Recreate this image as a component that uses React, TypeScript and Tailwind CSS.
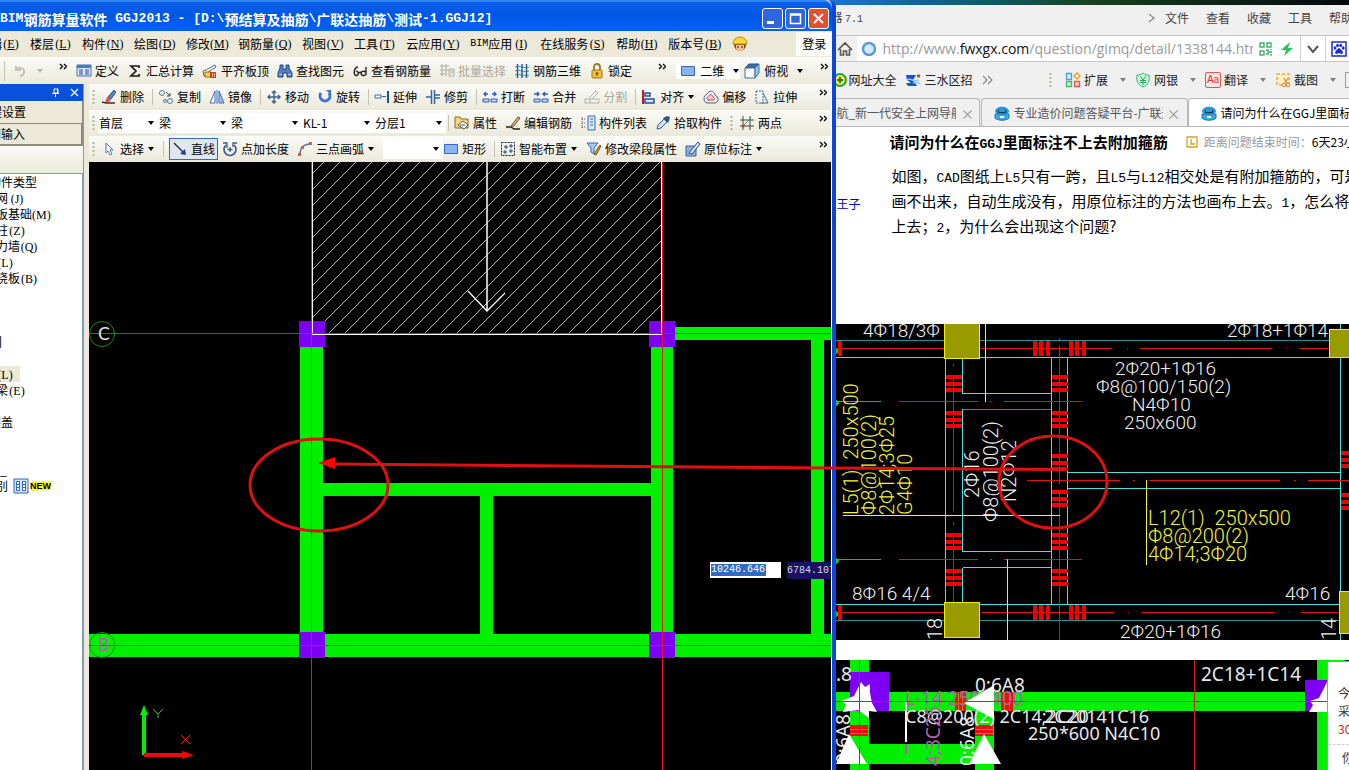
import type { ReactNode } from "react";

const icons: Record<string, ReactNode> = {
  define: (
    <>
      <path d="M1 2h14v11H1z" fill="#dbe7fb" stroke="#4a6fb5" />
      <path d="M1 2h14v3H1z" fill="#4a78c8" />
      <path d="M3 7h4M3 9h4M3 11h4M9 7h4M9 9h4M9 11h4" stroke="#27488c" />
    </>
  ),
  sigma: <path d="M12 5V3H4l5 5-5 5h8v-2" fill="none" stroke="#1a1a1a" strokeWidth="1.700" />,
  slab: (
    <>
      <path d="M1 8l3-1 9-5 1 2-8 5v4H2z" fill="#fff" stroke="#3d6b96" />
      <path d="M3 9h6v5H3z" fill="#ffd23f" stroke="#a86b00" />
      <path d="M8 15V9h6v6z" fill="#b5482a" />
      <path d="M10.500 10v4M12.500 10v4" stroke="#e8b090" />
    </>
  ),
  find: (
    <>
      <path d="M3 2h3v4h3V2h3v3l3 5v4h-5v-4H6v4H1v-4l2-5z" fill="#4f7fc4" stroke="#23457f" />
      <path d="M2.500 11.500h2M11.500 11.500h2" stroke="#fff" />
    </>
  ),
  glasses: (
    <path
      d="M6 4C2 4 1 12 4 12.500s3-5 0-4M7 10c1-1 2-1 2 0M14 4v8M13.500 9c-2-1.500-4.500-.5-4.500 1.500s3.500 3 4.500 1"
      fill="none"
      stroke="#222"
      strokeWidth="1.400"
    />
  ),
  batch: (
    <path d="M1 3h9M1 7h9M1 11h6M3 1v12M7 1v12M10 6h5v7h-5zM11 8h3M11 10h3" fill="none" stroke="#b0aea2" />
  ),
  rebar3d: (
    <>
      <path d="M1 4c5-2 9 2 14 0M1 8c5-2 9 2 14 0M1 12c5-2 9 2 14 0" fill="none" stroke="#3f8ad0" />
      <path d="M3.500 1v14M8 1v14M12.500 1v14" stroke="#1d5796" strokeWidth="1.400" />
    </>
  ),
  lock: (
    <>
      <path d="M5 7V4a3 3 0 0 1 6 0v3" fill="none" stroke="#9a7a22" strokeWidth="1.800" />
      <rect x="3" y="7" width="10" height="8" rx="1" fill="#f4bd3a" stroke="#a37413" />
      <path d="M8 9v4M6.500 10.500h3" stroke="#604000" />
    </>
  ),
  rect: <path d="M1.500 3.500h13v9h-13z" fill="#8bb2f5" stroke="#3a67bb" />,
  cube: (
    <>
      <path d="M1 5l4-4h10l-4 4z" fill="#3b6ea5" stroke="#1f4a7c" />
      <path d="M1 5h10v10H1z" fill="#fff" stroke="#3b6ea5" />
      <path d="M11 5l4-4v9l-4 5z" fill="#9fc0e6" stroke="#3b6ea5" />
    </>
  ),
  erase: (
    <>
      <path d="M7 8l6-7 2 2-5 7z" fill="#5b84c4" stroke="#38527f" />
      <path d="M6 8l4 2-2 3-4 1z" fill="#e0533d" />
      <path d="M1 13l4 1h9" fill="none" stroke="#333" strokeWidth="1.300" />
    </>
  ),
  copy: (
    <g fill="none" stroke="#587aa6">
      <circle cx="4" cy="4" r="2.500" />
      <circle cx="12" cy="12" r="2.500" />
      <circle cx="7" cy="12" r="1.500" />
      <path d="M8 3l4 4m0-3v3H9" stroke="#444" />
    </g>
  ),
  mirror: (
    <>
      <path d="M6 2v12H1z" fill="#fff" stroke="#3d6cb9" />
      <path d="M10 2v12h5z" fill="#9dbdec" stroke="#3d6cb9" />
      <path d="M8 1v14" stroke="#3d6cb9" />
    </>
  ),
  move: (
    <path
      d="M8 2v12M2 8h12M6 4l2-2 2 2M6 12l2 2 2-2M4 6L2 8l2 2M12 6l2 2-2 2"
      fill="none"
      stroke="#3f628f"
      strokeWidth="1.400"
    />
  ),
  rotate: (
    <>
      <path d="M4 4a5 5 0 1 0 8 0" fill="none" stroke="#3f73d2" strokeWidth="3" />
      <path d="M9 1h5v5z" fill="#3f73d2" />
    </>
  ),
  extend: (
    <>
      <path d="M1 6h6v3H1zM8 7.500h4" fill="#fff" stroke="#3466a8" />
      <path d="M14 2v12" stroke="#234f8c" strokeWidth="2" />
    </>
  ),
  trim: (
    <>
      <path d="M6.500 1v14M9.500 1v14" stroke="#3466a8" strokeWidth="1.500" />
      <path d="M1 8h5M10 6h5M10 9h5" stroke="#3466a8" strokeWidth="1.500" />
    </>
  ),
  breakAt: (
    <g fill="none" stroke="#2f5fb3">
      <path d="M1 10h6v3H1zM9 10h6v3H9z" fill="#c7d9f5" />
      <path d="M2 5h4M4 3L2 5l2 2M10 5h4M12 3l2 2-2 2" strokeWidth="1.400" />
    </g>
  ),
  join: (
    <g fill="none" stroke="#2f5fb3">
      <path d="M1 10h6v3H1zM9 10h6v3H9z" fill="#c7d9f5" />
      <path d="M1 5h5M4 3l2 2-2 2M10 5h5M12 3l-2 2 2 2" strokeWidth="1.400" />
    </g>
  ),
  split: <path d="M1 10h14v4H1zM5 9l7-7 2 2-6 6M6 10v4" fill="none" stroke="#b3b1a5" />,
  align: (
    <>
      <path d="M2 1v14" stroke="#b41f2c" strokeWidth="2" />
      <path d="M4 4h5v3H4zM4 10h9v4H4z" fill="#d7e4fa" stroke="#2b4f96" strokeWidth="1.500" />
    </>
  ),
  offset: (
    <g fill="none">
      <path d="M4 5c2-4 7-4 8 1 4 2 4 7 0 8H4c-4-1-4-7 0-9z" stroke="#4b5f8c" />
      <path d="M6 7c1-2 3-2 4 1 2 1 2 3 0 3H5c-2-1-1-3 1-4z" stroke="#c8445a" fill="#f6c8cf" />
    </g>
  ),
  stretch: (
    <>
      <path d="M2 2h7v12H2z" fill="none" stroke="#3466a8" strokeDasharray="2 1" />
      <path d="M9 4l5 10H7" fill="none" stroke="#3466a8" />
    </>
  ),
  props: (
    <>
      <path d="M1 4V2h5l1 2h7v9H1z" fill="#f7d47a" stroke="#8a6b2a" />
      <path d="M4 10l5-4 5 4-4 4z" fill="#fff" stroke="#5a5a5a" />
      <path d="M6 10h5" stroke="#5a5a5a" />
    </>
  ),
  editBar: (
    <>
      <path d="M1 12h5l3 2h6" fill="none" stroke="#222" strokeWidth="1.500" />
      <path d="M6 11l7-9 2 1-6 8z" fill="#e7b77d" stroke="#6b4a22" />
    </>
  ),
  list: (
    <>
      <path d="M2 2v12M2 4h3M2 8h3M2 12h3" stroke="#555" strokeDasharray="1 1" />
      <path d="M8 1h7v14H8z" fill="#dbe7fb" stroke="#3f68ad" />
      <path d="M10 4h3M10 7h3M10 10h3" stroke="#3f68ad" />
    </>
  ),
  pick: (
    <>
      <path d="M2 14l1-4 6-6 3 3-6 6z" fill="#cfe0f5" stroke="#345f96" />
      <path d="M8 3l5 5 1-2 1-4-3-1-2 1z" fill="#2c568f" />
    </>
  ),
  twoPoint: (
    <>
      <path d="M1 5h14M1 11h14M4 1v14M11 1v14" stroke="#444" />
      <path d="M3 12l9-9" stroke="#3a9a4a" />
      <circle cx="4" cy="11" r="1.500" fill="#c93535" />
    </>
  ),
  cursor: <path d="M5 2v10l2-2 2 4 2-1-2-4h3z" fill="#fff" stroke="#5773a8" />,
  line: (
    <>
      <path d="M2 2l10 10" stroke="#222" strokeWidth="1.300" />
      <path d="M14 14l-6-1 5-5z" fill="#23457f" />
    </>
  ),
  pointLen: (
    <>
      <path d="M4 4a6 6 0 1 0 8 0" fill="none" stroke="#36598c" strokeWidth="1.600" />
      <path d="M1 2h4v5M8 6v5M5.500 8.500h5M15 2h-4v4" fill="none" stroke="#36598c" strokeWidth="1.300" />
    </>
  ),
  arc: (
    <>
      <path d="M3 14C3 7 7 3 13 3" fill="none" stroke="#56779f" strokeWidth="1.500" />
      <path d="M1 12h3v3H1zM4 5h3v3H4zM12 1h3v3h-3z" fill="#c9614f" />
    </>
  ),
  smart: (
    <>
      <path d="M1.500 1.500h13v13h-13z" fill="none" stroke="#222" strokeDasharray="2 1" />
      <path d="M6 4v4M4 6h4M11 3v4M9 5h4M5 9v4M3 11h4M11 8v4M9 10h4" stroke="#24468c" />
    </>
  ),
  modify: (
    <>
      <path d="M1 2h11l-4 5v6l-3-2V7z" fill="#a7cbf2" stroke="#3269a8" />
      <path d="M8 13l6-9 1 1-5 9z" fill="#e6a35a" stroke="#704614" />
    </>
  ),
  note: (
    <>
      <path d="M1 5h10v10H1z" fill="#8db1de" stroke="#3c639a" />
      <path d="M4 12l9-11 2 2-8 10z" fill="#dbe7fb" stroke="#24477f" />
    </>
  ),
  undo: (
    <path d="M4 3v4h5M4 7c3-4 9-2 8 3-1 2-2 3-4 3" fill="none" stroke="#c4c2b8" strokeWidth="2" />
  ),
  helmet: (
    <>
      <circle cx="8" cy="9" r="6" fill="#8a4a24" />
      <path d="M1 8a7 7 0 0 1 14 0z" fill="#ffd633" stroke="#b58a00" />
      <path d="M4 9h8v3a4 3 0 0 1-8 0z" fill="#f3c091" />
      <path d="M6 10v2M10 10v2" stroke="#222" />
    </>
  ),
  table: (
    <>
      <path d="M1 1h14v14H1z" fill="#cfe3fa" stroke="#2f6ab5" />
      <path d="M3.500 3.500h3v9h-3zM9.500 3.500h3v9h-3zM3 6.500h4M3 9.500h4M9 6.500h4M9 9.500h4" fill="#fff" stroke="#2f6ab5" />
    </>
  ),
  home: <path d="M1 9l7-7 7 7M3.500 8v6h3v-4h3v4h3V8" fill="none" stroke="#555" strokeWidth="1.600" />,
  globe: <circle cx="8" cy="8" r="6" fill="#d4e9fb" stroke="#5e9ad8" strokeWidth="2.500" />,
  qr: (
    <g fill="none" stroke="#3eb370" strokeWidth="1.400">
      <path d="M2 2h4v4H2zM9 2h4v4H9zM2 10h4v4H2z" />
      <path d="M8 9h2v2h4M8 13h3M13 13v2M13 8v1" />
    </g>
  ),
  bolt: <path d="M11 1L2 9h5l-2 6 9-8H9z" fill="#2fbf63" />,
  chevDown: <path d="M3 5l5 6 5-6" fill="none" stroke="#555" strokeWidth="2" />,
  paw: (
    <>
      <path d="M1 1h14v14H1z" fill="#fff" stroke="#1a2bd8" strokeWidth="1.500" />
      <g fill="#1a2bd8">
        <ellipse cx="4" cy="7" rx="1.400" ry="1.800" />
        <ellipse cx="6.500" cy="4.500" rx="1.400" ry="1.800" />
        <ellipse cx="9.700" cy="4.500" rx="1.400" ry="1.800" />
        <ellipse cx="12.200" cy="7" rx="1.400" ry="1.800" />
        <path d="M8 7c2 1 4 3 4 5-1 2-3 0-4 0s-3 2-4 0c0-2 2-4 4-5z" />
      </g>
    </>
  ),
  hao: (
    <>
      <circle cx="8" cy="8" r="7" fill="#1fa24a" />
      <circle cx="8" cy="8" r="5" fill="#ffe23b" />
      <path d="M8 5v6M5 8h6" stroke="#16803a" strokeWidth="2" />
    </>
  ),
  sanshui: (
    <>
      <path d="M1 3h10l-3 5 4 6H3l-2-3h5L2 8z" fill="#1e50c8" />
      <path d="M2 8c4-3 7 3 12 0M8 11c3-2 5 1 7 0" fill="none" stroke="#8fd0ff" strokeWidth="1.500" />
      <circle cx="13.500" cy="4" r="1.700" fill="#e23c2b" />
    </>
  ),
  extensions: (
    <g strokeWidth="1.300">
      <path d="M1.500 1.500h5v6h-5z" fill="#d4ecff" stroke="#4aa0e0" />
      <path d="M12 1l3 3-3 3-3-3z" fill="#fff" stroke="#f0a020" strokeWidth="1.500" />
      <path d="M1.500 9.500h5v5h-5z" fill="#c9f2d6" stroke="#3cba68" />
      <path d="M9.500 9.500h5v5h-5z" fill="#fbd0cc" stroke="#e2584e" />
    </g>
  ),
  bank: (
    <>
      <path d="M8 1c2 2 4 2 6 2 1 6-1 10-6 12C3 13 1 9 2 3c2 0 4 0 6-2z" fill="#d5f5df" stroke="#35b765" />
      <path d="M5 4l3 4 3-4M8 8v5M5 8.500h6M5 10.500h6" fill="none" stroke="#26a355" />
    </>
  ),
  snip: (
    <>
      <path d="M2 2h12v11H2z" fill="#fff0c8" stroke="#f0a630" strokeWidth="1.500" strokeDasharray="3 2" />
      <path d="M9 6l3 6M13 6l-4 6" stroke="#c97420" />
      <circle cx="9" cy="13" r="1.700" fill="#fff" stroke="#e0852a" />
      <circle cx="13" cy="13" r="1.700" fill="#fff" stroke="#e0852a" />
    </>
  ),
  robot: (
    <>
      <path d="M1 7C1 0 15 0 15 7l-2 2H3z" fill="#2196d8" />
      <path d="M4 5h8v3H4z" fill="#123a5c" />
      <path d="M5 6h6" stroke="#9fdcff" />
      <path d="M1 9h14v4c-3 3-11 3-14 0z" fill="#35abe6" stroke="#1878b0" />
      <path d="M6 11h4v2H6z" fill="#fff" />
    </>
  ),
  clock: <path d="M3 3h10v10H3zM7 5v5h4" fill="none" stroke="#d8a032" strokeWidth="1.300" />,
};

function Icon({ name }: { name: string }) {
  return (
    <svg viewBox="0 0 16 16" className="h-4 w-4 shrink-0">
      {icons[name]}
    </svg>
  );
}

function Caret({ gray }: { gray?: boolean }) {
  return (
    <svg viewBox="0 0 8 6" className="h-[6px] w-2 shrink-0">
      <path d="M1 1h6L4 5z" fill={gray ? "#808080" : "#000"} />
    </svg>
  );
}

function More() {
  return (
    <svg viewBox="0 0 8 8" className="h-2 w-2 shrink-0 self-start">
      <path d="M1 1l2.500 2.500L1 6M5 1l2.500 2.500L5 6" fill="none" stroke="#000" strokeWidth="1.300" />
    </svg>
  );
}

function Grip() {
  return (
    <svg viewBox="0 0 3 16" className="h-4 w-[3px] shrink-0">
      <path d="M1.500 1v15" stroke="#b5b3a4" strokeWidth="2" strokeDasharray="2 2" />
    </svg>
  );
}

function Sep() {
  return <span className="mr-[5px] h-4 w-px shrink-0 bg-[#c5c2b2]" />;
}

function Tool({ icon, label, off, caret }: { icon: string; label: string; off?: boolean; caret?: boolean }) {
  return (
    <button
      disabled={off}
      className="mr-2 flex shrink-0 items-center gap-[3px] whitespace-nowrap text-black disabled:text-[#aca899]"
    >
      <Icon name={icon} />
      {label}
      {caret && <Caret />}
    </button>
  );
}

function Combo({ label, value, wide }: { label: string; value: string; wide?: boolean }) {
  return (
    <span className={`relative flex h-5 shrink-0 items-center bg-white ${wide ? "w-[72px]" : "w-[60px]"}`}>
      <select
        aria-label={label}
        className="h-5 w-full appearance-none bg-transparent pl-px font-['Noto_Sans_CJK_SC',sans-serif] text-xs outline-none"
      >
        <option>{value}</option>
      </select>
      <span className="pointer-events-none absolute right-[3px] flex h-5 items-center">
        <Caret />
      </span>
    </span>
  );
}

function Key({ k, plain }: { k: string; plain?: boolean }) {
  return (
    <span className="inline-block w-[18px] text-center font-['Liberation_Serif',serif]">
      ({plain ? k : <u>{k}</u>})
    </span>
  );
}

function Mono({ children }: { children: ReactNode }) {
  return <span className="font-['Liberation_Mono',monospace] text-[13px] leading-none">{children}</span>;
}

const menus = [
  ["编辑", "E"],
  ["楼层", "L"],
  ["构件", "N"],
  ["绘图", "D"],
  ["修改", "M"],
  ["钢筋量", "Q"],
  ["视图", "V"],
  ["工具", "T"],
  ["云应用", "Y"],
  ["BIM应用", "I"],
  ["在线服务", "S"],
  ["帮助", "H"],
  ["版本号", "B"],
];

const treeRows: [string, string][] = [
  ["轴网", "J"],
  ["筏板基础", "M"],
  ["框柱", "Z"],
  ["剪力墙", "Q"],
  ["梁", "L"],
  ["现浇板", "B"],
  ["", ""],
  ["", ""],
  ["", ""],
  ["门", ""],
  ["", ""],
  ["梁", "L"],
  ["圈梁", "E"],
];

const band = "flex h-[26px] items-center overflow-hidden bg-linear-to-b from-[#fbfbf8] to-[#ebe9da] pr-1 pl-[3px]";

function TitleBar() {
  return (
    <header className="flex h-[31px] items-center justify-between overflow-hidden rounded-tr-lg border-t-2 border-[#2f86f5] bg-linear-to-b from-[#0a5ee8] via-[#0058e6] to-[#0062f8] pr-[3px]">
      <h1 className="flex items-center pt-1 text-sm leading-5 font-bold whitespace-pre text-white">
        <Mono>BIM</Mono>钢筋算量软件
        <Mono> GGJ2013 - [D:\</Mono>预结算及抽筋
        <Mono>\</Mono>广联达抽筋
        <Mono>\</Mono>测试
        <Mono>-1.GGJ12]</Mono>
      </h1>
      <div className="flex gap-[2px] pt-1">
        <button aria-label="最小化" className="h-[21px] w-[21px] rounded-[3px] border border-white bg-[#2f66e0]">
          <svg viewBox="0 0 19 19">
            <path d="M4 12h7v3H4z" fill="#fff" />
          </svg>
        </button>
        <button aria-label="最大化" className="h-[21px] w-[21px] rounded-[3px] border border-white bg-[#2f66e0]">
          <svg viewBox="0 0 19 19">
            <path d="M4.500 5h10v9.500h-10zM4 6h11" fill="none" stroke="#fff" strokeWidth="1.500" />
          </svg>
        </button>
        <button aria-label="关闭" className="h-[21px] w-[21px] rounded-[3px] border border-white bg-[#e0512f]">
          <svg viewBox="0 0 19 19">
            <path d="M5 5l9 9M14 5l-9 9" stroke="#fff" strokeWidth="2.200" />
          </svg>
        </button>
      </div>
    </header>
  );
}

function MenuBar() {
  return (
    <nav className="flex h-[26px] items-center overflow-hidden bg-[#ece9d8]">
      <div className="-ml-[22px] flex">
        {menus.map(([label, key]) => (
          <button key={label} className="mr-[10px] flex shrink-0 items-center whitespace-nowrap">
            {label.startsWith("BIM") ? (
              <>
                <span className="font-['Liberation_Mono',monospace] text-[10px]">BIM</span>
                {label.slice(3)}
              </>
            ) : (
              label
            )}
            <Key k={key} />
          </button>
        ))}
      </div>
      <Icon name="helmet" />
      <button className="ml-auto h-6 shrink-0 bg-[#fbfaf5] px-[6px] whitespace-nowrap">登录</button>
    </nav>
  );
}

function MainToolbar() {
  return (
    <div className="flex h-[27px] items-center overflow-hidden bg-linear-to-b from-[#fbfbf8] to-[#ebe9da] pr-1">
      <span className="ml-1 h-5 w-px bg-[#c5c2b2]" />
      <button aria-label="撤销" disabled className="ml-[7px] flex items-center gap-2">
        <Icon name="undo" />
        <svg viewBox="0 0 8 6" className="h-[6px] w-2">
          <path d="M1 1h6L4 5z" fill="#b5b3a7" />
        </svg>
      </button>
      <span className="mr-[9px] ml-[15px] flex h-4 items-start">
        <More />
      </span>
      <Tool icon="define" label="定义" />
      <Tool icon="sigma" label="汇总计算" />
      <Tool icon="slab" label="平齐板顶" />
      <Tool icon="find" label="查找图元" />
      <Tool icon="glasses" label="查看钢筋量" />
      <Tool icon="batch" label="批量选择" off />
      <Tool icon="rebar3d" label="钢筋三维" />
      <Tool icon="lock" label="锁定" />
      <span className="ml-auto flex h-4">
        <More />
      </span>
      <div className="ml-[10px] flex items-center">
        <button className="mr-1 flex items-center gap-1 bg-white pl-1">
          <Icon name="rect" />
          二维
          <span className="pl-1">
            <Caret />
          </span>
        </button>
        <button className="flex items-center gap-1">
          <Icon name="cube" />
          俯视
          <span className="pl-1">
            <Caret />
          </span>
        </button>
      </div>
      <span className="ml-4 flex h-4">
        <More />
      </span>
    </div>
  );
}

function SidePanel() {
  return (
    <aside className="flex w-[84px] shrink-0 flex-col overflow-hidden border-r border-[#9a9a8c] bg-[#ece9d8]">
      <div className="flex h-[17px] items-center justify-end gap-[10px] bg-[#0a50dc] pr-1">
        <svg viewBox="0 0 9 9" className="h-[9px] w-[9px]">
          <path d="M3 1h4v4H3zM1 5.500h7M4.500 6v3M6.500 1v4" fill="none" stroke="#fff" />
        </svg>
        <svg viewBox="0 0 9 9" className="h-[9px] w-[9px]">
          <path d="M1 1l7 7M8 1L1 8" stroke="#fff" strokeWidth="1.200" />
        </svg>
      </div>
      <button className="h-[23px] border-r border-b border-[#8c8a7c] text-left whitespace-nowrap">
        <span className="-ml-[22px]">工程设置</span>
      </button>
      <button className="h-[22px] border-r-2 border-b-2 border-[#8c8a7c] text-left whitespace-nowrap">
        <span className="-ml-[23px]">绘图输入</span>
      </button>
      <div className="h-[27px] bg-linear-to-b from-[#fbfbf8] to-[#ebe9da]" />
      <div className="flex-1 border-t border-r border-[#7f9db9] bg-white">
        <ul className="leading-4 whitespace-nowrap">
          <li className="-ml-[11px] h-4">构件类型</li>
          {treeRows.map(([label, key], i) => (
            <li key={i} className="-ml-4 h-4">
              <span className={i === 11 ? "inline-block h-4 bg-[#ece9d8] pr-[6px]" : label === "门" ? "pl-[6px]" : ""}>
                {label}
                {key && <Key k={key} plain />}
              </span>
            </li>
          ))}
          <li className="h-4" />
          <li className="-ml-[11px] h-4">楼盖</li>
          <li className="h-4" />
          <li className="h-4" />
          <li className="h-4">_</li>
          <li className="-ml-4 flex h-4 items-center">
            识别
            <span className="ml-[5px] flex">
              <Icon name="table" />
            </span>
            <svg viewBox="0 0 24 12" className="h-3 w-6">
              <path d="M1 2l22-1-1 9-20 1z" fill="#ffef3a" />
              <text x="1" y="9" fontSize="9" fontWeight="700" fontFamily="Liberation Sans, sans-serif">
                NEW
              </text>
            </svg>
          </li>
        </ul>
      </div>
    </aside>
  );
}

// x + y is constant along each hatch line, one line every 16px
const hatch = Array.from({ length: 33 }, (_, i) => 486 + i * 16);

function ModelCanvas() {
  return (
    <div className="relative min-h-[608px] flex-1 overflow-hidden bg-black">
      <svg className="absolute inset-0 h-full w-full" shapeRendering="crispEdges">
        <defs>
          <clipPath id="slab-area">
            <path d="M313 162h348v172H313z" />
          </clipPath>
        </defs>
        <g transform="translate(-89 -162)">
          <g clipPath="url(#slab-area)" stroke="#b8b8b8">
            {hatch.map((s) => (
              <path key={s} d={`M${s - 162} 162L${s - 334} 334`} />
            ))}
          </g>
          <g fill="#00f000">
            <path d="M300 346h23v288h-23zM651 346h22v288h-22z" />
            <path d="M89 634h760v23H89zM323 483h328v13H323zM480 496h13v138h-13z" />
            <path d="M675 327h174v13H675zM811 340h13v294h-13z" />
          </g>
          <path d="M299 321h26v26h-26zM649 321h26v26h-26zM299 632h26v26h-26zM649 632h26v26h-26z" fill="#7d00f5" />
          <path d="M312.500 162v172.500h349V162" fill="none" stroke="#fff" />
          <path d="M89 333h760v1H89zM89 645h760v1H89zM311 162h1v900h-1zM662 162h1v900h-1z" fill="#f01414" />
          <g fill="none" stroke="#fff" shapeRendering="auto">
            <path d="M487 162v149" strokeWidth="1.500" />
            <path d="M468 291l19 20 18-18" strokeWidth="1.300" />
          </g>
          <g fill="none" stroke="#1c8c1c" shapeRendering="auto">
            <circle cx="102" cy="334" r="12.500" />
            <circle cx="102" cy="645" r="12.500" />
          </g>
          <g fontFamily="DejaVu Sans, sans-serif" fontSize="17">
            <text x="98" y="340" fill="#e8e8e8">C</text>
            <text x="98" y="651" fill="#b060b0">B</text>
          </g>
          <g shapeRendering="auto">
            <path d="M142 755v-40h-2l4-10 4 10h-2v40z" fill="#00f000" />
            <path d="M144 753h38v-2l12 4-12 4v-2h-38z" fill="#f00808" />
            <path d="M153 709l5 5 5-5M158 714v4" fill="none" stroke="#22c022" />
            <path d="M181 735l9 9M190 735l-9 9" stroke="#d02020" />
          </g>
        </g>
      </svg>
      <div className="absolute top-[400px] left-[621px] flex gap-[6px] font-['Liberation_Mono',monospace] text-[10px] text-white">
        <div className="flex h-4 w-[71px] items-center bg-white pl-px">
          <input
            aria-label="X"
            defaultValue="10246.646"
            className="h-3 w-[55px] bg-[#316ac5] leading-3 text-white outline-none"
          />
        </div>
        <input
          aria-label="Y"
          defaultValue="6784.107"
          className="h-[17px] w-[71px] bg-[#1a1060] text-[#d8d8f0] outline-none"
        />
      </div>
    </div>
  );
}

function ModelWindow() {
  return (
    <section className="flex min-h-screen min-w-0 flex-col overflow-hidden rounded-tr-lg border-r-4 border-[#0a48dc] bg-[#ece9d8]">
      <TitleBar />
      <MenuBar />
      <MainToolbar />
      <div className="flex min-h-0 flex-1">
        <SidePanel />
        <div className="flex min-w-0 flex-1 flex-col border-r border-white pl-[5px]">
          <div className={band}>
            <Grip />
            <span className="w-[6px] shrink-0" />
            <Tool icon="erase" label="删除" />
            <Sep />
            <Tool icon="copy" label="复制" />
            <Tool icon="mirror" label="镜像" />
            <Sep />
            <Tool icon="move" label="移动" />
            <Tool icon="rotate" label="旋转" />
            <Sep />
            <Tool icon="extend" label="延伸" />
            <Tool icon="trim" label="修剪" />
            <Sep />
            <Tool icon="breakAt" label="打断" />
            <Tool icon="join" label="合并" />
            <Tool icon="split" label="分割" off />
            <Sep />
            <Tool icon="align" label="对齐" caret />
            <Tool icon="offset" label="偏移" />
            <Tool icon="stretch" label="拉伸" />
            <span className="ml-auto flex h-4">
              <More />
            </span>
          </div>
          <div className={band}>
            <Grip />
            <span className="w-[3px] shrink-0" />
            <Combo label="楼层" value="首层" />
            <Combo label="构件大类" value="梁" wide />
            <Combo label="构件类型" value="梁" wide />
            <Combo label="构件" value="KL-1" wide />
            <Combo label="分层" value="分层1" wide />
            <span className="w-[2px] shrink-0" />
            <Sep />
            <Tool icon="props" label="属性" />
            <Tool icon="editBar" label="编辑钢筋" />
            <Tool icon="list" label="构件列表" />
            <Tool icon="pick" label="拾取构件" />
            <Grip />
            <span className="w-[6px] shrink-0" />
            <Tool icon="twoPoint" label="两点" />
            <span className="ml-auto flex h-4">
              <More />
            </span>
          </div>
          <div className={band}>
            <Grip />
            <span className="w-[6px] shrink-0" />
            <Tool icon="cursor" label="选择" caret />
            <Sep />
            <button className="mr-1 flex h-[22px] shrink-0 items-center gap-[3px] border border-[#316ac5] bg-[#dfe6f2] px-[2px] whitespace-nowrap">
              <Icon name="line" />
              直线
            </button>
            <Tool icon="pointLen" label="点加长度" />
            <Tool icon="arc" label="三点画弧" caret />
            <Combo label="画弧方式" value="" />
            <Tool icon="rect" label="矩形" />
            <Sep />
            <Tool icon="smart" label="智能布置" caret />
            <Tool icon="modify" label="修改梁段属性" />
            <Tool icon="note" label="原位标注" caret />
            <span className="ml-auto flex h-4">
              <More />
            </span>
          </div>
          <ModelCanvas />
        </div>
      </div>
    </section>
  );
}

// each pair of beams carries stirrup marks in groups of three
const barsH = [341, 605];
const barsV = [375, 411, 533, 569];

const notes: [number, number, string][] = [
  [863, 337, "4Φ18/3Φ"],
  [1227, 337, "2Φ18+1Φ14"],
  [1115, 375, "2Φ20+1Φ16"],
  [1096, 393, "Φ8@100/150(2)"],
  [1132, 411, "N4Φ10"],
  [1124, 429, "250x600"],
  [852, 600, "8Φ16 4/4"],
  [1285, 600, "4Φ16"],
  [1120, 638, "2Φ20+1Φ16"],
];

const turned: [number, number, string, string][] = [
  [858, 515, "L5(1)  250x500", "#f2f23a"],
  [876, 515, "Φ8@100(2)", "#f2f23a"],
  [894, 515, "2Φ14;3Φ25", "#f2f23a"],
  [912, 515, "G4Φ10", "#f2f23a"],
  [979, 498, "2Φ16", "#f0f0f0"],
  [998, 522, "Φ8@100(2)", "#f0f0f0"],
  [1016, 502, "N2Φ12", "#f0f0f0"],
  [942, 640, "18", "#f0f0f0"],
  [1336, 640, "14", "#f0f0f0"],
];

function Triple({ x, y, upright }: { x: number; y: number; upright?: boolean }) {
  return upright ? (
    <path d={`M${x} ${y}h4v15h-4zM${x + 6} ${y}h4v15h-4zM${x + 13} ${y}h4v15h-4z`} fill="#f00000" />
  ) : (
    <path d={`M${x} ${y}h16v4h-16zM${x} ${y + 7}h16v4h-16zM${x} ${y + 13}h16v4h-16z`} fill="#f00000" />
  );
}

function CadDrawing() {
  return (
    <svg className="block h-[316px] w-full bg-black" role="img" aria-label="CAD图纸">
      <g transform="translate(-836 -324)">
        <g shapeRendering="crispEdges" fill="none">
          <path d="M836 340.500h513M962 409.500h89M836 620.500h513" stroke="#2a8f8f" />
          <path
            d="M836 357.500h513M836 604.500h513M945.500 358v244M962.500 358v35h89M962.500 602v-34M962.500 567.500h89M962.500 409v142.500h89M1051.500 357v247M1067.500 357v247M1067 472.500h273M1067 488.500h273M1340.500 324v316"
            stroke="#4ae0e0"
          />
          <path
            d="M836 348.500h108M981 348.500h131M1127 348.500h1M1140 348.500h132M1286 348.500h1M1299 348.500h30M836 612.500h108M982 612.500h132M1128 612.500h1M1142 612.500h133M1289 612.500h1M1301 612.500h38M899 401.500h79M990 401.500h2M1004 401.500h78M899 559.500h79M990 559.500h2M1004 559.500h78M1027 480.500h93M1133 480.500h2M1149 480.500h131M1294 480.500h2M1308 480.500h41M953.500 364v2M953.500 375v136M953.500 522v3M953.500 533v70M1059.500 338v2M1059.500 346v138M1059.500 490v150"
            stroke="#e01414"
          />
          <path d="M836 401.500h45M836 559.500h45" stroke="#20c020" />
          <path d="M836 348l3 3-3 3zM836 400l3 3-3 3zM836 558l3 3-3 3zM836 611l3 3-3 3z" fill="#20c020" />
          <path d="M985.500 324v78M1007.500 559v81M843 515.500h217M1146.500 480v85" stroke="#f2f23a" />
          {barsH.map((y) => (
            <g key={y}>
              <path d={`M838 ${y}h4v15h-4z`} fill="#f00000" />
              <Triple x={1033} y={y} upright />
              <Triple x={1069} y={y} upright />
            </g>
          ))}
          {barsV.map((y) => (
            <g key={y}>
              <Triple x={946} y={y} />
              <Triple x={1052} y={y} />
            </g>
          ))}
          <Triple x={1052} y={454} />
          <Triple x={1052} y={490} />
          <Triple x={1341} y={451} />
          <Triple x={1341} y={493} />
          <path
            d="M944.500 320h35v38h-35zM944.500 602.500h35v35h-35zM1329.500 329.500h35v28h-35zM1339.500 591.500h35v42h-35z"
            fill="#999900"
            stroke="#f2f200"
          />
        </g>
        <g fontFamily="Roboto, sans-serif" fontWeight="300" fontSize="19" fill="#f0f0f0">
          {notes.map(([x, y, t]) => (
            <text key={`${x}-${y}`} x={x} y={y}>
              {t}
            </text>
          ))}
          <g fill="#f2f23a" fontSize="20">
            <text x="1148" y="525" className="whitespace-pre">{"L12(1)  250x500"}</text>
            <text x="1148" y="543">Φ8@200(2)</text>
            <text x="1148" y="561">4Φ14;3Φ20</text>
          </g>
          {turned.map(([x, y, t, color]) => (
            <text
              key={`${x}-${y}`}
              transform={`translate(${x} ${y}) rotate(-90)`}
              fill={color}
              fontSize="20"
              className="whitespace-pre"
            >
              {t}
            </text>
          ))}
        </g>
      </g>
    </svg>
  );
}

function ModelPhoto() {
  return (
    <svg className="block h-[110px] w-full bg-black" role="img" aria-label="模型截图">
      <g transform="translate(-836 -660)">
        <g shapeRendering="crispEdges">
          <path
            d="M836 692h491v19H836zM850 660h19v110h-19zM975 711h19v59h-19zM869 744h106v20H869zM1317 660h10v110h-10zM1327 660h18v3h-18z"
            fill="#00f000"
          />
          <path d="M850 672h39v39h-39zM1305 680h22v31h-22z" fill="#7d00f5" />
          <path d="M850 725h18v11h-18zM975 725h18v11h-18zM955 692h11v19h-11zM1001 692h12v19h-12z" fill="#e81010" />
          <path
            d="M850 729.500h18M850 733.500h18M975 729.500h18M975 733.500h18M958.500 692v19M962.500 692v19M1004.500 692v19M1009.500 692v19"
            stroke="#c08000"
          />
          <path d="M905.500 702v40" stroke="#fff" strokeWidth="2" />
          <path d="M905.500 744v10" stroke="#c050c0" strokeWidth="2" />
        </g>
        <g fontFamily="Noto Sans, sans-serif" fontSize="19" fill="#e8e8e8">
          <text x="905" y="705" fill="#b060a8">L-14 250*400</text>
          <text x="975" y="692">0:6A8</text>
          <text x="1201" y="681">2C18+1C14</text>
          <g fontSize="18">
            <text x="905" y="723">C8@200(2) 2C14;2C20</text>
            <text x="1044" y="723">2C20141C16</text>
            <text x="1028" y="740">250*600 N4C10</text>
          </g>
          <text x="836" y="681">.8</text>
          <text transform="translate(850 764) rotate(-90)">0:6A8</text>
          <text transform="translate(974 766) rotate(-90)">0:6A8</text>
          <text transform="translate(940 766) rotate(-90)" fill="#b060a8">4;3C25</text>
        </g>
        <g fill="#fff">
          <path d="M841 701l13-5 7-14 4 5 5-3v9l2 10 5 9-8-1v7l-11-8-7 1-8 1 3-8z" />
          <path d="M836 764l13-30 18 30zM964 703l30-18v34zM969 764l15-30 17 30zM1327 682l-8 16-9 3 3 4-4 7h18z" />
        </g>
        <path d="M836 701h492v1H836zM859 660h1v110h-1zM1194 660h1v110h-1zM1327 660h1v110h-1z" fill="#e01818" />
      </g>
    </svg>
  );
}

function ExtButton({ icon, label }: { icon: ReactNode; label: string }) {
  return (
    <button className="flex w-[70px] shrink-0 items-center gap-[3px] whitespace-nowrap text-[#222]">
      {icon}
      {label}
      <span className="pl-2">
        <Caret gray />
      </span>
    </button>
  );
}

function BrowserWindow() {
  return (
    <section className="relative flex min-w-0 flex-col overflow-hidden bg-white">
      <div className="h-[5px] shrink-0 bg-linear-to-r from-[#1f6fd0] via-[#16441c] to-[#04080e]" />
      <div className="flex h-[30px] shrink-0 items-center bg-[#f0f0f0] pb-1 text-[#444]">
        <span className="-ml-[6px] whitespace-nowrap">
          器 <span className="font-['Liberation_Mono',monospace] text-[10px]">7.1</span>
        </span>
        <div className="ml-auto flex shrink-0 items-center gap-[17px] whitespace-nowrap">
          <svg viewBox="0 0 8 10" className="-mr-2 h-[10px] w-2">
            <path d="M1 1l5 4-5 4" fill="none" stroke="#888" strokeWidth="1.300" />
          </svg>
          <button>文件</button>
          <button>查看</button>
          <button>收藏</button>
          <button>工具</button>
          <button className="-mr-1">帮助</button>
        </div>
      </div>
      <div className="flex h-[27px] shrink-0 items-center border-y border-[#c4c4c4] bg-white">
        <button aria-label="主页" className="-ml-[3px] flex h-full w-6 items-center justify-center bg-[#f0f0f0]">
          <Icon name="home" />
        </button>
        <span className="mr-[5px] ml-1 flex">
          <Icon name="globe" />
        </span>
        <p className="min-w-0 flex-1 overflow-hidden font-['Open_Sans',sans-serif] text-sm leading-5 whitespace-nowrap text-[#999]">
          http://www.<span className="text-[#111]">fwxgx.com</span>/question/gimq/detail/1338144.htm
        </p>
        <span className="ml-[5px] flex shrink-0 gap-[5px]">
          <Icon name="qr" />
          <Icon name="bolt" />
        </span>
        <button aria-label="展开" className="ml-[5px] flex h-full w-[26px] shrink-0 items-center justify-center border-x border-[#d0d0d0]">
          <Icon name="chevDown" />
        </button>
        <button aria-label="百度" className="mr-[2px] ml-[5px] shrink-0">
          <Icon name="paw" />
        </button>
      </div>
      <div className="flex h-9 shrink-0 items-center overflow-hidden bg-[#f0f0f0] whitespace-nowrap text-[#222]">
        <a href="#hao" className="-ml-1 flex shrink-0 items-center">
          <Icon name="hao" />
          网址大全
        </a>
        <a href="#sanshui" className="ml-[9px] flex shrink-0 items-center gap-[3px]">
          <Icon name="sanshui" />
          三水区招
        </a>
        <svg viewBox="0 0 12 10" className="ml-[10px] h-[10px] w-3 shrink-0">
          <path d="M1 1l4 4-4 4M6 1l4 4-4 4" fill="none" stroke="#888" strokeWidth="1.200" />
        </svg>
        <div className="ml-auto flex shrink-0 items-center">
          <Grip />
          <span className="w-[13px]" />
          <ExtButton icon={<Icon name="extensions" />} label="扩展" />
          <ExtButton icon={<Icon name="bank" />} label="网银" />
          <ExtButton
            icon={
              <span className="flex h-4 w-4 items-center justify-center rounded-[2px] border border-[#dd5a52] bg-[#fbe3e0] font-['Liberation_Sans',sans-serif] text-[10px] text-[#d04038]">
                Aa
              </span>
            }
            label="翻译"
          />
          <ExtButton icon={<Icon name="snip" />} label="截图" />
          <span className="h-4 w-1 border-y border-l border-[#999]" />
        </div>
      </div>
      <div className="flex h-[29px] shrink-0 items-end overflow-hidden border-b border-[#b8b8b8] bg-[#e8e8e8] whitespace-nowrap text-[#555]">
        <button className="flex h-7 w-[144px] shrink-0 items-center gap-1 rounded-tr-sm border-t border-r border-[#b8b8b8] bg-[#f0f0f0]">
          <span className="w-[120px] overflow-hidden text-left">航_新一代安全上网导航</span>
          <span className="text-sm text-[#999]">×</span>
        </button>
        <button className="ml-px flex h-7 w-[207px] shrink-0 items-center gap-[3px] rounded-t-sm border-x border-t border-[#b8b8b8] bg-[#f0f0f0] pl-3">
          <Icon name="robot" />
          <span className="w-[150px] overflow-hidden text-left">专业造价问题答疑平台-广联达</span>
          <span className="text-sm text-[#999]">×</span>
        </button>
        <button className="flex h-7 flex-1 items-center gap-[3px] overflow-hidden rounded-tl-sm border-t border-l border-[#b8b8b8] bg-white pl-3 text-black">
          <Icon name="robot" />
          请问为什么在GGJ里面标注不上去附加箍筋
        </button>
      </div>
      <main className="flex shrink-0 flex-col">
        <div className="flex h-[197px] overflow-hidden">
          <a href="#user" className="w-[55px] shrink-0 pt-[69px] text-[#0000cc]">
            王子
          </a>
          <div className="min-w-0">
            <div className="-ml-[2px] flex h-[30px] items-center whitespace-nowrap">
              <h2 className="text-[15px] font-bold">
                请问为什么在<Mono>GGJ</Mono>里面标注不上去附加箍筋
              </h2>
              <span className="ml-4 flex items-center gap-1 text-[#999]">
                <Icon name="clock" />
                距离问题结束时间：
              </span>
              <span>6天23小时</span>
            </div>
            <p className="pt-[6px] text-[15px] leading-[25px] whitespace-nowrap">
              如图，<Mono>CAD</Mono>图纸上<Mono>L5</Mono>只有一跨，且<Mono>L5</Mono>与<Mono>L12</Mono>
              相交处是有附加箍筋的，可是
              <br />
              画不出来，自动生成没有，用原位标注的方法也画布上去。<Mono>1</Mono>，怎么将它画
              <br />
              上去；<Mono>2</Mono>，为什么会出现这个问题?
            </p>
          </div>
        </div>
        <CadDrawing />
        <div className="h-5" />
        <ModelPhoto />
      </main>
      <aside className="absolute right-0 bottom-0 h-[109px] w-[22px] overflow-hidden border-t border-l border-[#f08040] bg-white pt-[22px] leading-[18px] whitespace-nowrap text-[#333]">
        <p className="pl-[10px]">今日</p>
        <p className="pl-[10px]">采纳</p>
        <p className="pl-[10px] text-[#d02020]">30</p>
        <p className="mt-[6px] border-t border-dashed border-[#ccc] pt-1 pl-[14px]">你</p>
      </aside>
    </section>
  );
}

export default function App() {
  return (
    <div className="relative grid min-h-screen grid-cols-[62%_1fr] overflow-hidden bg-[#2a6fc8] font-['Noto_Sans_CJK_SC',sans-serif] text-xs text-black">
      <ModelWindow />
      <BrowserWindow />
      <svg className="pointer-events-none absolute inset-0 h-full w-full" fill="none" stroke="#e01010" strokeWidth="3">
        <ellipse cx="319" cy="485" rx="69" ry="46" />
        <ellipse cx="1053" cy="482" rx="54" ry="46" />
        <path d="M1064 469.500L832 468 333 464" />
        <path d="M318 463l17-6v12z" fill="#ff0000" stroke="none" />
      </svg>
    </div>
  );
}
